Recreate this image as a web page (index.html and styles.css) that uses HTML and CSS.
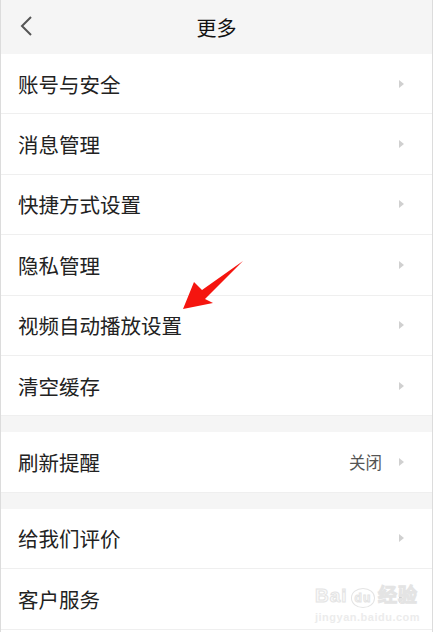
FILE: index.html
```html
<!DOCTYPE html>
<html lang="zh-CN">
<head>
  <meta charset="UTF-8">
  <meta name="viewport" content="width=device-width, initial-scale=1.0">
  <title>更多</title>
  <link rel="stylesheet" href="styles.css">
</head>
<body>
<div class="page">
  <div class="header">
    <a class="back" href="#">
      <svg width="16" height="22" viewBox="0 0 16 22"><path d="M12 2 L3 11 L12 20" fill="none" stroke="#555" stroke-width="2"/></svg>
    </a>
    <h1>更多</h1>
  </div>

  <div class="group">
    <div class="row"><span>账号与安全</span><i class="arrow"></i></div>
    <div class="row"><span>消息管理</span><i class="arrow"></i></div>
    <div class="row"><span>快捷方式设置</span><i class="arrow"></i></div>
    <div class="row"><span>隐私管理</span><i class="arrow"></i></div>
    <div class="row"><span>视频自动播放设置</span><i class="arrow"></i></div>
    <div class="row"><span>清空缓存</span><i class="arrow"></i></div>
  </div>

  <div class="group">
    <div class="row"><span>刷新提醒</span><em class="value">关闭</em><i class="arrow"></i></div>
  </div>

  <div class="group">
    <div class="row"><span>给我们评价</span><i class="arrow"></i></div>
    <div class="row"><span>客户服务</span><i class="arrow"></i></div>
  </div>

  <svg class="pointer" width="434" height="632" viewBox="0 0 434 632">
    <polygon points="243,261 202,290 194,282 183,309 213,303 205,299" fill="#f5150f"/>
  </svg>

  <div class="mark">
    <div class="mark-top">Bai<b>du</b>经验</div>
    <div class="mark-url">jingyan.baidu.com</div>
  </div>
</div>
</body>
</html>
```

FILE: styles.css
```css
* {
  margin: 0;
  padding: 0;
  box-sizing: border-box;
}
body {
  background-color: #fff;
  font-family: "Noto Sans CJK SC", "Noto Sans", sans-serif;
  color: #222;
}
.page {
  position: relative;
  width: 433px;
  height: 632px;
  border-left: 1px solid #dcdcdc;
  border-right: 1px solid #dcdcdc;
  background: #fff;
  overflow: hidden;
}
.header {
  height: 54px;
  background-color: #f5f5f5;
  display: flex;
  align-items: center;
  justify-content: center;
  position: relative;
}
.header h1 {
  font-size: 20px;
  font-weight: normal;
  color: #111;
}
.back {
  position: absolute;
  left: 18px;
  top: 15px;
  display: block;
  height: 22px;
}
.group {
  background: #fff;
}
.group + .group {
  border-top: 16px solid #f5f5f5;
}
.row {
  height: 60.4px;
  display: flex;
  align-items: center;
  padding: 0 28px 0 17px;
  border-bottom: 1px solid #efefef;
  font-size: 20.5px;
  color: #222;
}
.row span {
  flex: 1;
}
.value {
  font-style: normal;
  font-size: 16.5px;
  color: #555;
  margin-right: 17px;
}
.arrow {
  width: 0;
  height: 0;
  border-top: 4px solid transparent;
  border-bottom: 4px solid transparent;
  border-left: 5px solid #d0d0d0;
}
.pointer {
  position: absolute;
  left: -1px;
  top: 0;
  pointer-events: none;
}
.mark {
  position: absolute;
  left: 314px;
  top: 586px;
  color: #fafafa;
  -webkit-text-stroke: 1px #e4e4e4;
  font-family: "Liberation Sans", sans-serif;
  line-height: 1;
}
.mark-top {
  font-size: 19px;
  font-weight: bold;
  letter-spacing: 1px;
}
.mark-top b {
  display: inline-block;
  font-size: 12px;
  border: 1px solid #e4e4e4;
  border-radius: 50%;
  padding: 3px 3px;
  margin: 0 3px;
}
.mark-url {
  font-size: 11px;
  font-weight: bold;
  margin-top: 4px;
  letter-spacing: 0.5px;
  -webkit-text-stroke: 0;
  color: #ececec;
}
```
